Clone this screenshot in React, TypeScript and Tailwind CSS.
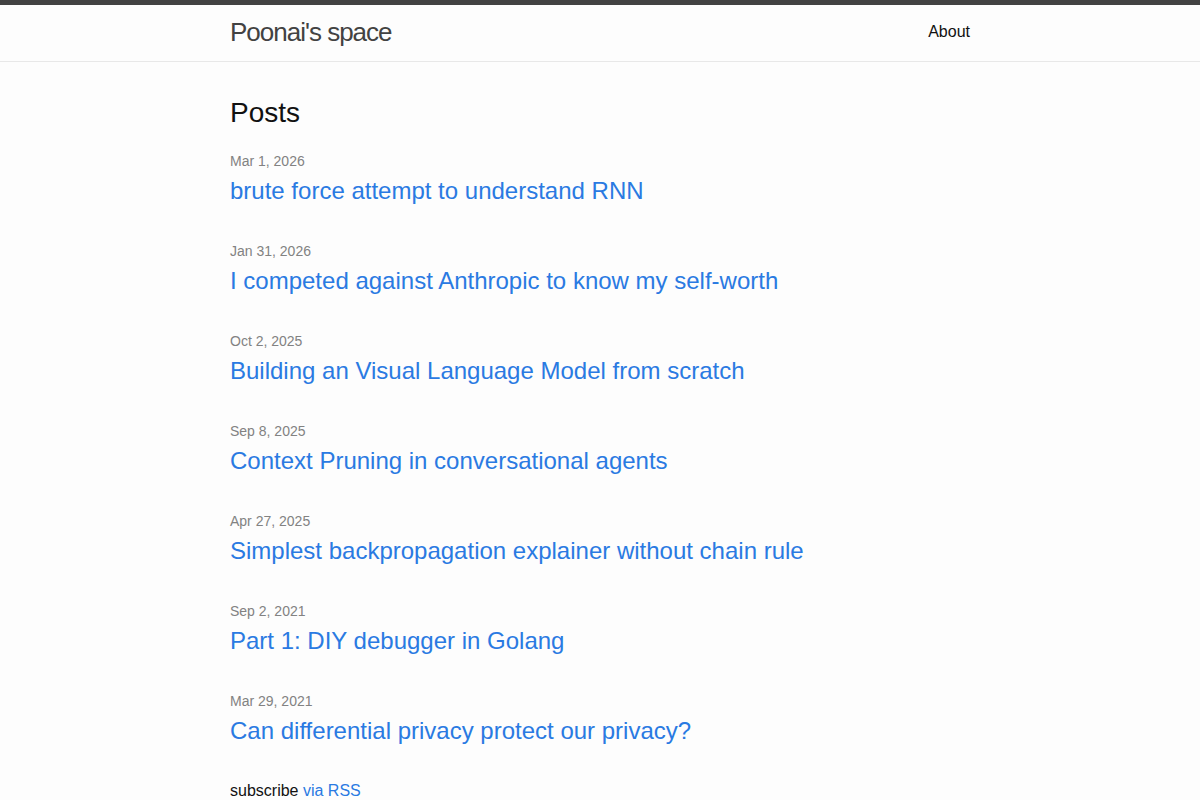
const posts = [
  { date: "Mar 1, 2026", title: "brute force attempt to understand RNN" },
  { date: "Jan 31, 2026", title: "I competed against Anthropic to know my self-worth" },
  { date: "Oct 2, 2025", title: "Building an Visual Language Model from scratch" },
  { date: "Sep 8, 2025", title: "Context Pruning in conversational agents" },
  { date: "Apr 27, 2025", title: "Simplest backpropagation explainer without chain rule" },
  { date: "Sep 2, 2021", title: "Part 1: DIY debugger in Golang" },
  { date: "Mar 29, 2021", title: "Can differential privacy protect our privacy?" },
]

export default function App() {
  return (
    <div className="min-h-screen bg-[#fdfdfd] text-[#111] text-[16px] leading-[1.5] font-['Liberation_Sans',Helvetica,Arial,sans-serif]">
      <header className="border-t-[5px] border-t-[#424242] border-b border-b-[#e8e8e8] min-h-[62px]">
        <div className="max-w-[740px] mx-auto flex justify-between items-start">
          <a href="#" className="text-[26px] leading-[54px] tracking-[-1px] text-[#424242]">
            Poonai's space
          </a>
          <nav className="leading-[54px]">
            <a href="#" className="text-[#111]">About</a>
          </nav>
        </div>
      </header>

      <main className="py-[30px]">
        <div className="max-w-[740px] mx-auto">
          <h2 className="text-[28px] leading-[42px] mb-[15px]">Posts</h2>
          <ul>
            {posts.map((p) => (
              <li key={p.title} className="mb-[30px]">
                <span className="text-[14px] text-[#828282]">{p.date}</span>
                <h3 className="text-[24px] leading-[36px]">
                  <a href="#" className="text-[#2a7ae2]">{p.title}</a>
                </h3>
              </li>
            ))}
          </ul>
          <p>
            subscribe <a href="#" className="text-[#2a7ae2]">via RSS</a>
          </p>
        </div>
      </main>
    </div>
  )
}
